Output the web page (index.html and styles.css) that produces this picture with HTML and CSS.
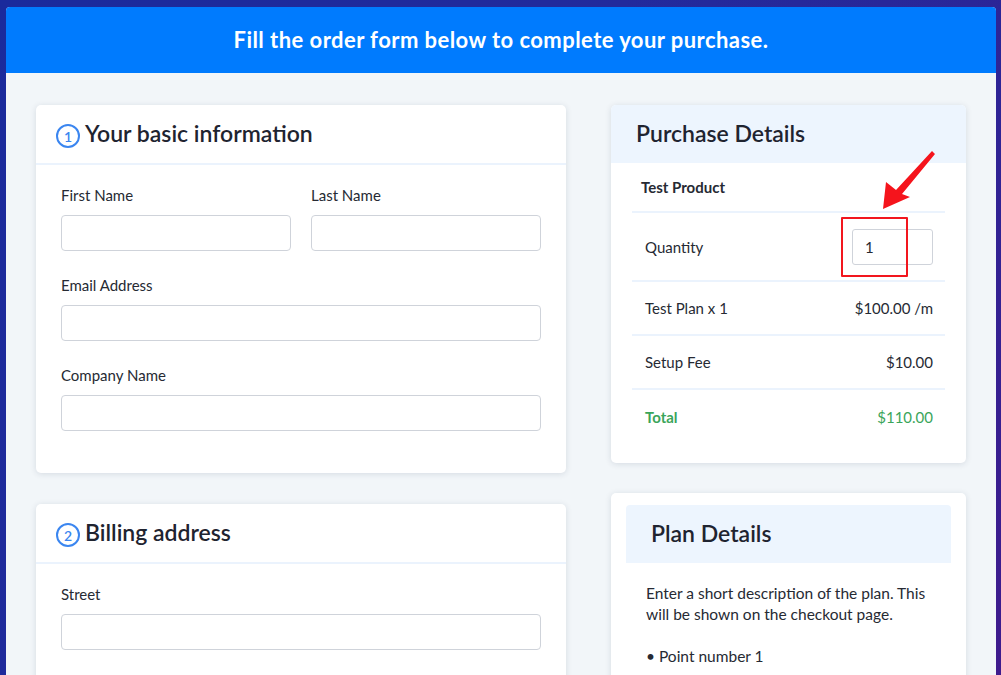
FILE: index.html
```html
<!DOCTYPE html>
<html>
<head>
<meta charset="utf-8">
<link rel="stylesheet" href="styles.css">
</head>
<body>
<div class="frame">
  <header class="topbar">Fill the order form below to complete your purchase.</header>
  <main class="content">
    <section class="col-left">
      <div class="card">
        <div class="card-head"><span class="step">1</span><h2>Your basic information</h2></div>
        <div class="card-body">
          <div class="row2">
            <div class="field"><label>First Name</label><div class="input"></div></div>
            <div class="field"><label>Last Name</label><div class="input"></div></div>
          </div>
          <div class="field"><label>Email Address</label><div class="input"></div></div>
          <div class="field last"><label>Company Name</label><div class="input"></div></div>
        </div>
      </div>
      <div class="card">
        <div class="card-head"><span class="step">2</span><h2>Billing address</h2></div>
        <div class="card-body">
          <div class="field"><label>Street</label><div class="input"></div></div>
        </div>
      </div>
    </section>
    <section class="col-right">
      <div class="card purchase">
        <div class="p-head"><h2>Purchase Details</h2></div>
        <ul class="lines">
          <li class="line product">Test Product</li>
          <li class="line qty"><span>Quantity</span><div class="qty-input">1</div></li>
          <li class="line"><span>Test Plan x 1</span><span>$100.00 /m</span></li>
          <li class="line"><span>Setup Fee</span><span>$10.00</span></li>
          <li class="line total"><span>Total</span><span>$110.00</span></li>
        </ul>
        <div class="highlight"></div>
        <svg class="arrow" width="70" height="70" viewBox="0 0 70 70">
          <polygon points="12,64 15,37 25,45 61,6 64,9 31,49 39,52" fill="#f5141c"/>
        </svg>
      </div>
      <div class="card plan">
        <div class="plan-head"><h2>Plan Details</h2></div>
        <div class="plan-body">
          <p>Enter a short description of the plan. This will be shown on the checkout page.</p>
          <p>• Point number 1</p>
        </div>
      </div>
    </section>
  </main>
</div>
</body>
</html>
```
FILE: styles.css
```css
* { box-sizing: border-box; }
html, body { margin: 0; height: 100%; }
body {
  background: linear-gradient(120deg, #1a2a9c 0%, #222a9c 45%, #2a2698 70%, #3f1b8d 100%);
  font-family: Lato, "Open Sans", sans-serif;
  color: #1f2430;
  overflow: hidden;
}
.frame {
  margin: 7px 0 0 6px;
  width: 990px;
  height: 700px;
  background: #f2f6f9;
  border-radius: 4px 4px 0 0;
  overflow: hidden;
}
.topbar {
  height: 66px;
  background: #007bfe;
  color: #fff;
  font-size: 22px;
  font-weight: 700;
  display: flex;
  align-items: center;
  justify-content: center;
  padding-bottom: 2px;
  letter-spacing: 0.45px;
}
.content {
  display: flex;
  gap: 45px;
  padding: 32px 30px 0 30px;
}
.col-left { width: 530px; display: flex; flex-direction: column; gap: 31px; }
.col-right { width: 355px; display: flex; flex-direction: column; gap: 30px; }
.card {
  background: #fff;
  border-radius: 5px;
  box-shadow: 0 1px 6px rgba(20, 40, 70, 0.13);
  position: relative;
}
.card-head {
  height: 60px;
  border-bottom: 2px solid #ebf3fd;
  display: flex;
  align-items: center;
  padding: 0 20px 3px;
  gap: 5px;
}
.card-head h2 { margin: 0; font-size: 23px; font-weight: 600; color: #1f2430; }
.step {
  width: 24px; height: 24px;
  border: 2px solid #3b86f0;
  border-radius: 50%;
  color: #3b86f0;
  font-size: 14px;
  font-weight: 600;
  display: flex; align-items: center; justify-content: center;
  margin-top: 7px;
}
.card-body { padding: 20px 25px 18px; }
.row2 { display: flex; gap: 20px; }
.row2 .field { flex: 1; }
.field { margin-bottom: 24px; }
.field label { display: block; font-size: 15px; line-height: 20px; margin-bottom: 10px; color: #262a33; }
.input {
  height: 36px;
  border: 1px solid #cfd3da;
  border-radius: 4px;
  background: #fff;
}
.purchase { padding-bottom: 19px; }
.p-head {
  height: 58px;
  background: #edf5fe;
  border-radius: 5px 5px 0 0;
  display: flex;
  align-items: center;
  padding: 0 0 2px 25px;
}
.p-head h2, .plan-head h2 { margin: 0; font-size: 23px; font-weight: 600; color: #1f2430; }
.lines { list-style: none; margin: 0 21px; padding: 0; }
.line {
  display: flex;
  justify-content: space-between;
  align-items: center;
  height: 54px;
  padding: 0 12px 0 13px;
  border-bottom: 2px solid #ebf3fd;
  font-size: 15px;
  color: #262a33;
}
.line.product { height: 50px; font-weight: 700; font-size: 15px; padding-left: 9px; }
.line.qty { height: 69px; }
.line.total { border-bottom: none; color: #3aa55a; }
.line.total span:first-child { font-weight: 700; }
.qty-input {
  width: 81px; height: 36px;
  border: 1px solid #cfd3da;
  border-radius: 3px;
  padding-left: 12px;
  display: flex; align-items: center;
  font-size: 15px;
}
.highlight {
  position: absolute;
  left: 230px; top: 112px;
  width: 67px; height: 60px;
  border: 2px solid #f2161e;
  border-radius: 1px;
}
.arrow { position: absolute; left: 260px; top: 40px; }
.plan { padding: 12px 15px 20px; }
.plan-head {
  height: 58px;
  background: #edf5fe;
  border-radius: 4px 4px 0 0;
  display: flex; align-items: center;
  padding: 0 0 2px 25px;
}
.plan-body { padding: 20px 20px 0; }
.plan-body p { margin: 0 0 21px; font-size: 15.5px; line-height: 21px; color: #262a33; }
```
